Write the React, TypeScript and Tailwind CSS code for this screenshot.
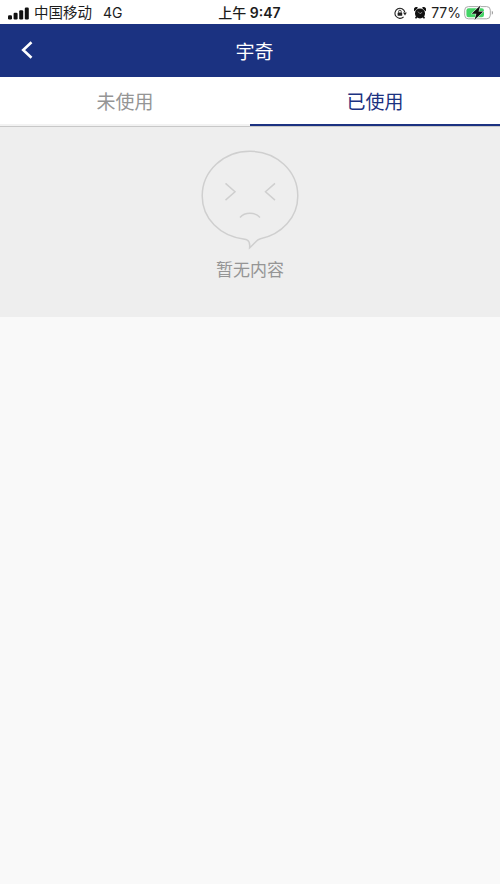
import clsx from "clsx";

const tabs = [
  { name: "未使用", active: false },
  { name: "已使用", active: true },
];

const SignalIcon = () => (
  <svg className="h-[13px] w-[21px]" viewBox="0 0 21 13" fill="#111">
    <rect x="0" y="8.2" width="4" height="4.3" rx="1.2" />
    <rect x="5.6" y="5.8" width="4" height="6.7" rx="1.2" />
    <rect x="11.2" y="3.2" width="4" height="9.3" rx="1.2" />
    <rect x="16.8" y="0.5" width="4" height="12" rx="1.2" />
  </svg>
);

const RotationLockIcon = () => (
  <svg className="h-[13px] w-[13px]" viewBox="0 0 13 13" fill="none" stroke="#222">
    <path d="M9.6 9.8A5 5 0 1 1 10.8 5" strokeWidth="1.1" />
    <path d="M9 5.4h3.8L11 8.4z" fill="#222" stroke="none" />
    <rect x="3.6" y="5.4" width="4.6" height="3.4" rx="0.5" fill="#222" stroke="none" />
    <path d="M4.6 5.6V4.5a1.3 1.3 0 0 1 2.6 0V5.6" strokeWidth="0.9" />
  </svg>
);

const AlarmIcon = () => (
  <svg className="h-3 w-3" viewBox="0 0 12 12" fill="#111">
    <circle cx="6" cy="6.4" r="5" />
    <path d="M0.6 4.2A2.4 2.4 0 0 1 4 0.8zM11.4 4.2A2.4 2.4 0 0 0 8 0.8z" />
    <path d="M2.8 9.3L1.6 11.3M9.2 9.3l1.2 2" stroke="#111" strokeWidth="1.6" />
    <path d="M4 4.6L6 6.7l2.2-1.4" fill="none" stroke="#bbb" strokeWidth="0.7" />
  </svg>
);

const BatteryIcon = () => (
  <svg className="h-4 w-[30px]" viewBox="0 0 30 16" fill="none">
    <rect x="0.7" y="1.6" width="25.6" height="12.2" rx="3.6" stroke="#aaa" />
    <path d="M27.8 5.8v4c1.6-.7 1.6-3.3 0-4z" fill="#999" />
    <rect x="2.4" y="3.2" width="17.6" height="9" rx="2.2" fill="#43d466" />
    <path
      d="M16.4 0.4L7.6 8.7h4.8l-2 6.2 9-8.3h-4.9z"
      fill="#111"
      stroke="#fff"
      strokeWidth="1"
      paintOrder="stroke"
    />
  </svg>
);

const SadFace = () => (
  <svg className="h-[100px] w-[98px]" viewBox="0 0 98 100" fill="none" stroke="#cfcfcf" strokeWidth="1.5">
    <path d="M42.5 89C19 86 1.2 68.5 1.2 46C1.2 21 22.5 1.3 49 1.3S96.8 21 96.8 46C96.8 67.5 80.5 84.5 59.5 88.8C55.5 89.6 53 94.5 48.6 97.8C49 94 48.2 91.2 46.4 90.1C45.4 89.4 44 89.2 42.5 89Z" />
    <path d="M24.5 33.4l9.5 8.4-9.5 8.3M74 33.4l-9.5 8.4 9.5 8.3" />
    <path d="M39 67.4c4.8-5.4 15-5.4 20 0" />
  </svg>
);

const App = () => {
  return (
    <div className="flex h-[888px] w-[500px] flex-col bg-white font-['Inter','Noto_Sans_CJK_SC',sans-serif]">
      {/* Status bar */}
      <div className="grid h-6 shrink-0 grid-cols-3 items-center pr-[6px] pl-2 text-[14px] leading-6 text-[#1c1c1c]">
        <div className="flex items-center pt-px">
          <SignalIcon />
          <span className="ml-[5px] text-[14.5px]">中国移动</span>
          <span className="ml-[11px] text-[14px]">4G</span>
        </div>
        <div className="pt-px pr-[3px] text-center font-semibold whitespace-nowrap">
          <span className="font-medium">上午</span> 9:47
        </div>
        <div className="flex items-center justify-end pt-px">
          <RotationLockIcon />
          <span className="ml-[7px]">
            <AlarmIcon />
          </span>
          <span className="mr-[3px] ml-[5px] text-[14px]">77%</span>
          <BatteryIcon />
        </div>
      </div>

      {/* Header */}
      <header className="grid h-[53px] shrink-0 grid-cols-3 items-center bg-[#1b3281] text-white">
        <svg className="mb-px ml-[21px] h-[18px] w-3" viewBox="0 0 12 18" fill="none" stroke="#fff" strokeWidth="2.6">
          <path d="M10.5 1.2L2.2 9l8.3 7.8" />
        </svg>
        <h1 className="pt-[5px] pl-[9px] text-center text-[19px]">宇奇</h1>
      </header>

      {/* Tabs */}
      <nav className="grid h-[50px] shrink-0 grid-cols-2 border-b border-[#c8c8c8] bg-white">
        {tabs.map((tab) => (
          <button
            key={tab.name}
            className={clsx(
              "border-b-2 pt-[5px] text-[19px]",
              tab.active ? "border-[#1b3281] text-[#1b3281]" : "border-[#f2f2f2] text-[#959595]"
            )}
          >
            {tab.name}
          </button>
        ))}
      </nav>

      {/* Empty state */}
      <section className="flex h-[190px] shrink-0 flex-col items-center bg-[#eee] pt-[23px]">
        <SadFace />
        <p className="mt-2 text-[17px] leading-6 text-[#959595]">暂无内容</p>
      </section>

      <div className="mb-1 flex-1 bg-[#f9f9f9]" />
    </div>
  );
};

export default App;
